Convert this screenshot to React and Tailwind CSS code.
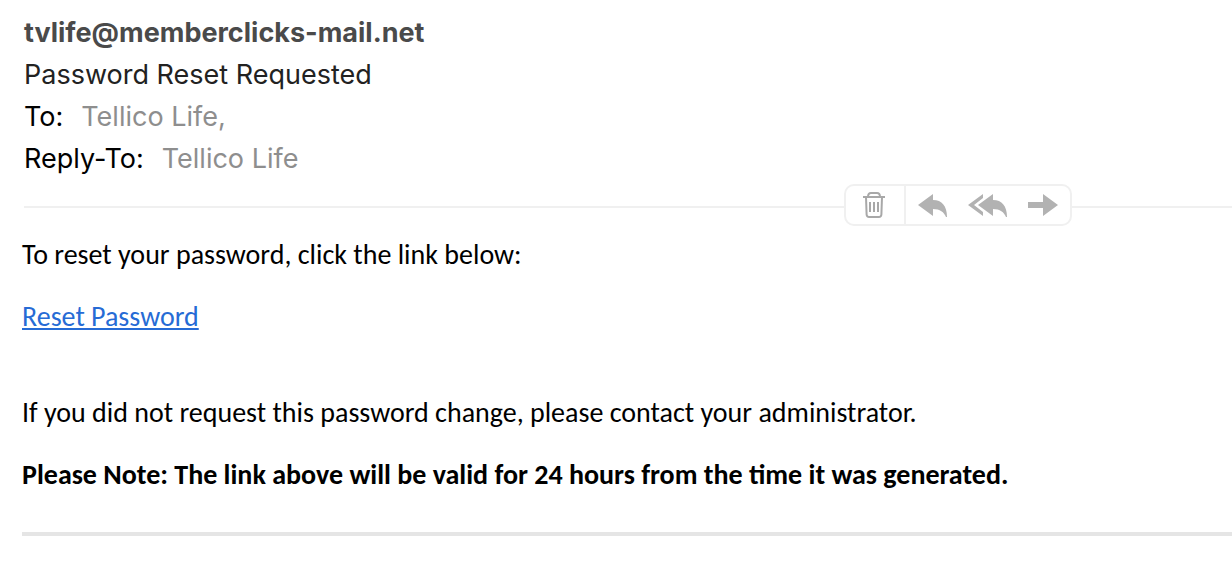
import React from "react";

const iconButton = "flex items-center justify-center text-[#b2b2b2] hover:text-[#777]";

export default function App() {
  return (
    <main className="min-h-screen bg-white pt-3 text-black">
      <header className="pl-6 font-[Inter,sans-serif] text-[27px] leading-[42px]">
        <h1 className="font-bold text-[#4a4a4a]">tvlife@memberclicks-mail.net</h1>
        <p className="text-[#222]">Password Reset Requested</p>
        <p className="flex gap-[18px]">
          <span>To:</span>
          <span className="text-[#8e8e8e]">Tellico Life,</span>
        </p>
        <p className="flex gap-[18px]">
          <span>Reply-To:</span>
          <span className="text-[#8e8e8e]">Tellico Life</span>
        </p>
      </header>

      <div className="mt-1 flex items-center pl-6">
        <div className="mt-1 h-0.5 flex-1 bg-[#f0f0f0]" />
        <div className="flex h-[42px] rounded-[10px] border-2 border-[#f0f0f0]">
          <button aria-label="Delete" className={`${iconButton} w-[60px] border-r-2 border-[#f0f0f0] pr-0.5`}>
            <svg width="22" height="26" viewBox="0 0 22 26" fill="none" stroke="#a8a8a8" strokeWidth="2">
              <path d="M0 5h22M5 5C5 2 6.500 1 8 1h6c1.500 0 3 1 3 4M3 5l.6 17.500q.2 2.500 2.500 2.500h9.800q2.300 0 2.500-2.500L19 5M7 10v10M11 10v10M15 10v10" />
            </svg>
          </button>
          <button aria-label="Reply" className={`${iconButton} w-[53px]`}>
            <svg width="29" height="23" viewBox="0 0 29 23" fill="currentColor">
              <path d="M0 11 15 0v6c9 0 14 6 14 17h-1c-2-5-6-8-13-8v7z" />
            </svg>
          </button>
          <button aria-label="Reply all" className={`${iconButton} w-[57px]`}>
            <svg width="39" height="23" viewBox="0 0 39 23" fill="currentColor">
              <path d="M10 11 25 0v6c9 0 14 6 14 17h-1c-2-5-6-8-13-8v7z" />
              <path d="M15 0 0 11l15 11v-4l-9-7 9-7z" />
            </svg>
          </button>
          <button aria-label="Forward" className={`${iconButton} w-[54px]`}>
            <svg width="30" height="22" viewBox="0 0 30 22" fill="currentColor">
              <path d="M0 8h15V0l15 11-15 11v-8H0z" />
            </svg>
          </button>
        </div>
        <div className="mt-1 h-0.5 w-[160px] bg-[#f0f0f0]" />
      </div>

      <article className="pl-[22px] pt-3 font-[Carlito,Lato,sans-serif] text-[28px] leading-[34px]">
        <p>To reset your password, click the link below:</p>
        <p className="mt-7">
          <a href="#reset" className="text-[#266bd5] underline">Reset Password</a>
        </p>
        <p className="mt-[62px]">If you did not request this password change, please contact your administrator.</p>
        <p className="mt-7 font-bold">Please Note: The link above will be valid for 24 hours from the time it was generated.</p>
        <hr className="mt-10 border-t-4 border-[#e5e5e5]" />
      </article>
    </main>
  );
}
